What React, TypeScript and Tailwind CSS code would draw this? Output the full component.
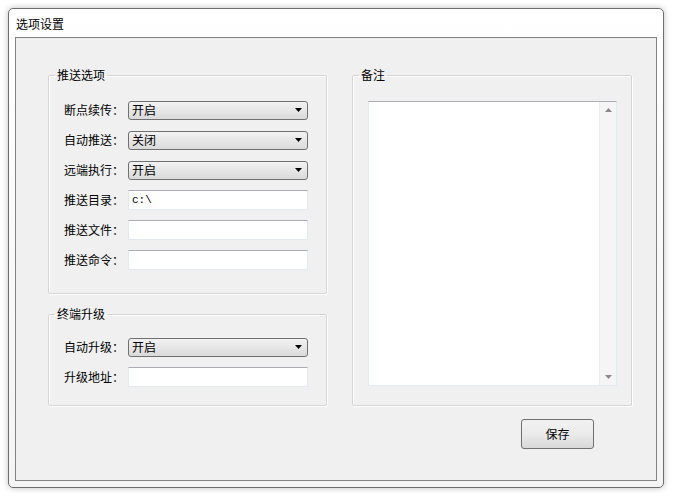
import React from 'react';

const font = { fontFamily: '"Noto Sans CJK SC", "Liberation Sans", sans-serif' };

const Combo: React.FC<{ value: string }> = ({ value }) => (
  <div className="w-[180px] h-[19px] flex items-center justify-between border border-[#707070] rounded-[3px] bg-gradient-to-b from-[#f2f2f2] to-[#dadada] pl-[3px] pr-[5px]">
    <span className="text-[12px] leading-none text-black">{value}</span>
    <svg width="7" height="4" viewBox="0 0 7 4"><path d="M0 0h7L3.5 4z" fill="#000" /></svg>
  </div>
);

const Field: React.FC<{ value?: string }> = ({ value }) => (
  <div className="w-[180px] h-[20px] flex items-center bg-white border border-[#e3e9ef] border-t-[#abadb3] px-[3px]">
    <span className="text-[11px] leading-none text-black font-['Liberation_Mono',monospace]">{value}</span>
  </div>
);

const Row: React.FC<{ label: string; children: React.ReactNode }> = ({ label, children }) => (
  <div className="h-[30px] flex items-center">
    <span className="w-[79px] shrink-0 pl-[15px] text-[12px] text-black whitespace-nowrap">{label}</span>
    {children}
  </div>
);

const Group: React.FC<{ title: string; className?: string; children: React.ReactNode }> = ({ title, className, children }) => (
  <fieldset className={`border border-[#d5d5d5] shadow-[inset_1px_1px_0_#fff,1px_1px_0_#fff] rounded-[2px] ${className ?? ''}`}>
    <legend className="ml-[6px] px-[2px] text-[12px] leading-[16px] text-black">{title}</legend>
    {children}
  </fieldset>
);

export default function App() {
  return (
    <div className="w-[674px] h-[497px] bg-white p-[8px]" style={font}>
      <div className="w-[656px] h-[480px] flex flex-col border border-[#6e6e6e] rounded-[5px] bg-gradient-to-b from-[#ffffff] to-[#f4f4f4] shadow-[0_0_6px_rgba(0,0,0,0.25)] px-[6px] pb-[6px]">
        <div className="h-[28px] flex items-center pl-[1px] pt-[2px] text-[12px] text-black">选项设置</div>
        <div className="flex-1 border border-[#828282] bg-[#f0f0f0] pl-[32px] pr-[24px] pt-[29px] flex flex-col">
          <div className="flex gap-[25px]">
            <div className="w-[279px] flex flex-col gap-[12px]">
              <Group title="推送选项" className="pt-[12px] pb-[18px]">
                <Row label="断点续传："><Combo value="开启" /></Row>
                <Row label="自动推送："><Combo value="关闭" /></Row>
                <Row label="远端执行："><Combo value="开启" /></Row>
                <Row label="推送目录："><Field value="c:\" /></Row>
                <Row label="推送文件："><Field /></Row>
                <Row label="推送命令："><Field /></Row>
              </Group>
              <Group title="终端升级" className="pt-[10px] pb-[13px]">
                <Row label="自动升级："><Combo value="开启" /></Row>
                <Row label="升级地址："><Field /></Row>
              </Group>
            </div>
            <Group title="备注" className="w-[280px] h-[339px]">
              <div className="h-full pt-[18px] pb-[19px] pl-[15px] pr-[14px]">
                <div className="h-full flex bg-white border border-[#e3e9ef] border-t-[#abadb3]">
                  <div className="flex-1" />
                  <div className="w-[17px] flex flex-col justify-between items-center bg-[#f5f5f5] border-l border-[#ececec] py-[6px]">
                    <svg width="7" height="4" viewBox="0 0 7 4"><path d="M3.5 0L7 4H0z" fill="#8a8a8a" /></svg>
                    <svg width="7" height="4" viewBox="0 0 7 4"><path d="M0 0h7L3.5 4z" fill="#8a8a8a" /></svg>
                  </div>
                </div>
              </div>
            </Group>
          </div>
          <div className="flex justify-end pr-[38px] pt-[13px]">
            <button className="w-[73px] h-[30px] border border-[#707070] rounded-[3px] bg-gradient-to-b from-[#f2f2f2] via-[#ebebeb] to-[#d8d8d8] text-[12px] text-black">保存</button>
          </div>
        </div>
      </div>
    </div>
  );
}
